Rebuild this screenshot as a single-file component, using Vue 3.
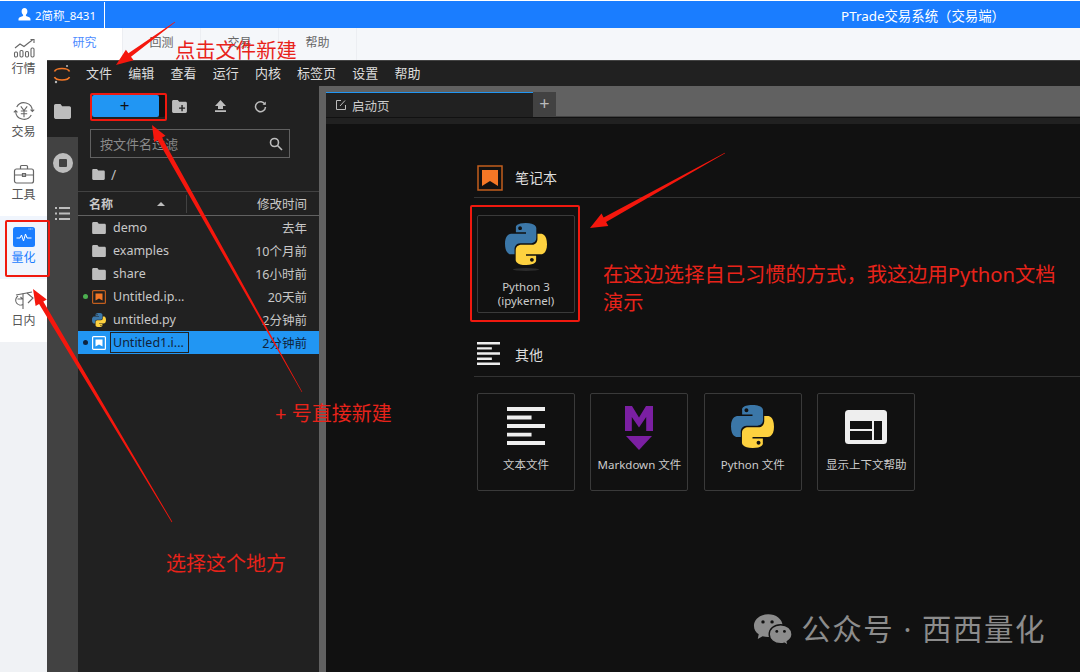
<script setup>
const navItems = [
  { label: '行情', icon: 'market' },
  { label: '交易', icon: 'trade' },
  { label: '工具', icon: 'tool' },
  { label: '量化', icon: 'quant', active: true },
  { label: '日内', icon: 'intraday' },
]

const topTabs = ['研究', '回测', '交易', '帮助']
const menus = ['文件', '编辑', '查看', '运行', '内核', '标签页', '设置', '帮助']

const files = [
  { name: 'demo', time: '去年', type: 'folder' },
  { name: 'examples', time: '10个月前', type: 'folder' },
  { name: 'share', time: '16小时前', type: 'folder' },
  { name: 'Untitled.ip...', time: '20天前', type: 'notebook', dot: 'green' },
  { name: 'untitled.py', time: '2分钟前', type: 'python' },
  { name: 'Untitled1.i...', time: '2分钟前', type: 'notebook', dot: 'dark', selected: true },
]

const otherCards = [
  { label: '文本文件', icon: 'text' },
  { label: 'Markdown 文件', icon: 'markdown' },
  { label: 'Python 文件', icon: 'python' },
  { label: '显示上下文帮助', icon: 'help' },
]

// tail -> tip, tapered like a hand-drawn annotation arrow
const arrows = [
  { x1: 175, y1: 22, x2: 116, y2: 65, tail: 0.3, neck: 2.2, head: 6.5, len: 17 },
  { x1: 302, y1: 392, x2: 152, y2: 125, tail: 0.3, neck: 2.5, head: 6.5, len: 16 },
  { x1: 172, y1: 522, x2: 33, y2: 289, tail: 0.3, neck: 2.5, head: 6.5, len: 16 },
  { x1: 725, y1: 153, x2: 590, y2: 228, tail: 0.3, neck: 2.5, head: 7, len: 17 },
]

function arrowPoints(a) {
  const dx = a.x2 - a.x1
  const dy = a.y2 - a.y1
  const d = Math.hypot(dx, dy)
  const ux = dx / d
  const uy = dy / d
  const nx = -uy
  const ny = ux
  const bx = a.x2 - ux * a.len
  const by = a.y2 - uy * a.len
  return [
    [a.x1 + nx * a.tail, a.y1 + ny * a.tail],
    [bx + nx * a.neck, by + ny * a.neck],
    [bx + nx * a.head, by + ny * a.head],
    [a.x2, a.y2],
    [bx - nx * a.head, by - ny * a.head],
    [bx - nx * a.neck, by - ny * a.neck],
    [a.x1 - nx * a.tail, a.y1 - ny * a.tail],
  ].map(p => p.map(n => n.toFixed(1)).join(',')).join(' ')
}
</script>

<template>
  <div class="page">
    <svg class="defs" width="0" height="0">
      <symbol id="py-logo" viewBox="0 0 22 22">
        <path fill="#3b77a8" d="M10.9 0c-5.6 0-5.2 2.4-5.2 2.4v2.5h5.3v.7H3.6S0 5.2 0 10.9s3.1 5.5 3.1 5.5H5v-2.7s-.1-3.1 3.1-3.1h5.3s3 0 3-2.9V2.9S16.8 0 10.9 0zM7.9 1.7c.5 0 1 .4 1 1s-.4 1-1 1c-.5 0-1-.4-1-1s.5-1 1-1z" />
        <path fill="#fdd13f" d="M11.1 22c5.6 0 5.2-2.4 5.2-2.4v-2.5h-5.3v-.7h7.4s3.6.4 3.6-5.3-3.1-5.5-3.1-5.5H17v2.7s.1 3.1-3.1 3.1H8.6s-3 0-3 2.9v4.8S5.2 22 11.1 22zm3-1.7c-.5 0-1-.4-1-1s.4-1 1-1c.5 0 1 .4 1 1s-.5 1-1 1z" />
      </symbol>
      <symbol id="folder" viewBox="0 0 16 14">
        <path fill="currentColor" d="M1.5 0h4.6l1.6 2h6.8c.8 0 1.5.7 1.5 1.5v9c0 .8-.7 1.5-1.5 1.5h-13C.7 14 0 13.300 0 12.500v-11C0 .7.700 0 1.500 0z" />
      </symbol>
      <symbol id="lines" viewBox="0 0 24 24">
        <path fill="currentColor" d="M0 0h24v2.500H0zM0 5.400h15.500v2.500H0zM0 10.800h24v2.500H0zM0 16.200h15.500v2.500H0zM0 21.500h24V24H0z" />
      </symbol>
    </svg>

    <header class="topbar">
      <div class="user">
        <svg width="13" height="13" viewBox="0 0 13 13"><path fill="#fff" d="M6.500 0C8.300 0 9.400 1.400 9.400 3.300 9.400 5 8.600 6.300 7.800 7c0 .8.500 1.100 1.500 1.500 2 .7 3.200 1.300 3.200 2.500v1.500H.5V11c0-1.200 1.200-1.800 3.200-2.500 1-.4 1.500-.7 1.500-1.500C4.400 6.300 3.600 5 3.600 3.300 3.600 1.400 4.700 0 6.500 0z" /></svg>
        <span>2简称_8431</span>
      </div>
      <div class="title">PTrade交易系统（交易端）</div>
    </header>

    <div class="shell">
      <nav class="sidenav">
        <div v-for="item in navItems" :key="item.label" class="nav-item" :class="{ active: item.active }">
          <svg v-if="item.icon === 'market'" class="nav-icon" viewBox="0 0 22 20" fill="none" stroke="#666" stroke-width="1.100">
            <path d="M2 10l5-4 4 2.500 5-4 3.500-2.500" /><path d="M17.500 1.500h3.500V5" />
            <rect x="1.500" y="14" width="3" height="5" rx="1.200" /><rect x="7" y="12.500" width="3" height="6.500" rx="1.200" /><rect x="12.500" y="13.500" width="3" height="5.500" rx="1.200" /><rect x="18" y="10" width="3" height="9" rx="1.200" />
          </svg>
          <svg v-else-if="item.icon === 'trade'" class="nav-icon" viewBox="0 0 22 22" fill="none" stroke="#666" stroke-width="1.200">
            <path d="M3 6.500A9.200 9.200 0 0 1 20.200 11" /><path d="M19 15.500A9.200 9.200 0 0 1 1.800 11" />
            <path d="M18.200 9.500l2 2 2-2M3.800 12.500l-2-2-2 2" />
            <path d="M7.500 6l3.500 4.500L14.500 6M7.500 11h7M7.500 14h7M11 10.500V18" />
          </svg>
          <svg v-else-if="item.icon === 'tool'" class="nav-icon" viewBox="0 0 22 20" fill="none" stroke="#666" stroke-width="1.200">
            <rect x="1.500" y="5" width="19" height="14" rx="2" /><path d="M7.500 5V2.500c0-.6.400-1 1-1h5c.6 0 1 .4 1 1V5M1.500 11h19M9.500 9.500h3v3h-3z" />
          </svg>
          <svg v-else-if="item.icon === 'quant'" class="nav-icon" viewBox="0 0 22 20">
            <rect width="22" height="20" rx="2.500" fill="#1a7dff" />
            <path d="M3.500 11h3.500l1.500-3 2 6 2-7 1.500 4h4.500" fill="none" stroke="#fff" stroke-width="1" />
            <path d="M15.500 2h4" stroke="#cfe2ff" stroke-width="1" stroke-dasharray="1 .6" />
          </svg>
          <svg v-else class="nav-icon" viewBox="0 0 22 20" fill="none" stroke="#666" stroke-width="1.100">
            <path d="M3 5l16-3" /><path d="M5 6c-2.500 1.500-3 5-1.500 7 1.500 2 4.500 2.500 6.500 1.500" /><path d="M4.500 9h5l-2-2M10 3.500V19" />
            <path d="M14 3l6 5-5 5" />
          </svg>
          <span>{{ item.label }}</span>
        </div>
      </nav>

      <div class="workspace">
        <div class="tabs">
          <div v-for="(tab, i) in topTabs" :key="tab" class="tab" :class="{ current: i === 0 }">{{ tab }}</div>
        </div>

        <div class="menubar">
          <svg class="jlogo" width="18" height="20" viewBox="0 0 18 20" fill="none">
            <path d="M1.500 7.500C3 3.500 15 3.500 16.500 7.500" stroke="#f37726" stroke-width="1.600" />
            <path d="M1.500 13C3 17 15 17 16.500 13" stroke="#f37726" stroke-width="1.600" />
            <circle cx="14" cy="2" r="1" fill="#bbb" /><circle cx="3" cy="18" r="1.200" fill="#bbb" />
          </svg>
          <span v-for="m in menus" :key="m" class="menu">{{ m }}</span>
        </div>

        <div class="lab">
          <aside class="strip">
            <div class="strip-active">
              <svg class="strip-folder" width="17" height="15"><use href="#folder" /></svg>
            </div>
            <div class="strip-rest">
              <div class="stop"><i></i></div>
              <svg class="strip-list" width="15" height="13" viewBox="0 0 15 13" fill="#bdbdbd">
                <path d="M0 0h2v2H0zM4 0h11v2H4zM0 5.500h2v2H0zM4 5.500h11v2H4zM0 11h2v2H0zM4 11h11v2H4z" />
              </svg>
            </div>
          </aside>

          <section class="browser">
            <div class="toolbar">
              <div class="new-btn"><div class="new-main">+</div></div>
              <svg class="tool-icon first" width="15" height="13" viewBox="0 0 16 14">
                <use href="#folder" /><path d="M10 5.500h1.500V8H14v1.500h-2.500V12H10V9.500H7.500V8H10z" fill="#212121" />
              </svg>
              <svg class="tool-icon" width="11" height="12" viewBox="0 0 11 12" fill="#bdbdbd"><path d="M5.500 0L11 6H8v3H3V6H0zM0 10.300h11V12H0z" /></svg>
              <svg class="tool-icon" width="13" height="13" viewBox="0 0 13 13" fill="none" stroke="#bdbdbd" stroke-width="1.500"><path d="M11 4.500A5 5 0 1 0 11.500 7" /><path d="M8.500 4.700h3.300V1.400z" fill="#bdbdbd" stroke="none" /></svg>
            </div>

            <div class="filter">
              <span>按文件名过滤</span>
              <svg width="14" height="14" viewBox="0 0 14 14" fill="none" stroke="#bdbdbd" stroke-width="1.600"><circle cx="5.500" cy="5.500" r="4" /><path d="M8.500 8.500L13 13" /></svg>
            </div>

            <div class="crumb">
              <svg width="13" height="11"><use href="#folder" /></svg>
              <span>/</span>
            </div>

            <div class="list-head">
              <div class="col-name"><b>名称</b><i class="sort"></i></div>
              <div class="col-time">修改时间</div>
            </div>

            <div v-for="f in files" :key="f.name" class="row" :class="{ selected: f.selected }">
              <i v-if="f.dot" class="dot" :class="f.dot"></i>
              <svg v-if="f.type === 'folder'" class="file-icon folder-icon" width="14" height="12"><use href="#folder" /></svg>
              <svg v-else-if="f.type === 'python'" class="file-icon" width="14" height="14"><use href="#py-logo" /></svg>
              <svg v-else class="file-icon" width="14" height="14" viewBox="0 0 14 14">
                <rect x=".6" y=".6" width="12.800" height="12.800" rx="1" fill="none" :stroke="f.selected ? '#fff' : '#c25e1d'" stroke-width="1.200" />
                <path d="M3.500 3.500h7v7L7 8.500l-3.500 2z" :fill="f.selected ? '#fff' : '#f37726'" />
              </svg>
              <span class="fname" :class="{ editing: f.selected }">{{ f.name }}</span>
              <span class="ftime">{{ f.time }}</span>
            </div>
          </section>

          <main class="main">
            <div class="doc-tabs">
              <div class="doc-tab">
                <svg width="10" height="10" viewBox="0 0 10 10" fill="none" stroke="#bbb" stroke-width="1"><path d="M9.500 5v4.500H.5V.5H5M4 6l5-5.500" /></svg>
                <span>启动页</span>
              </div>
              <div class="doc-add">+</div>
            </div>
            <div class="doc-sub"></div>

            <div class="launcher">
              <div class="sec-head">
                <svg width="26" height="26" viewBox="0 0 26 26">
                  <rect x="1" y="1" width="24" height="24" fill="none" stroke="#c25e1d" stroke-width="1.500" />
                  <path d="M5 5h16v16l-8-5-8 5z" fill="#f37726" />
                </svg>
                <span>笔记本</span>
              </div>
              <div class="cards">
                <div class="card kernel">
                  <svg class="kernel-logo" width="42" height="42"><use href="#py-logo" /></svg>
                  <i class="shadow"></i>
                  <div class="card-label two-line">Python 3<br />(ipykernel)</div>
                </div>
              </div>

              <div class="sec-head other">
                <svg class="lines-icon" width="23" height="23"><use href="#lines" /></svg>
                <span>其他</span>
              </div>
              <div class="cards">
                <div v-for="c in otherCards" :key="c.label" class="card">
                  <svg v-if="c.icon === 'text'" class="other-text" width="38" height="38"><use href="#lines" /></svg>
                  <svg v-else-if="c.icon === 'markdown'" class="other-md" width="30" height="46" viewBox="0 0 30 46">
                    <path d="M1 1h7l7 11.500L22 1h7v25h-6.800V12L15 22.500 7.800 12v14H1z" fill="#7b1fa2" />
                    <path d="M2 31h26L15 45z" fill="#7b1fa2" />
                  </svg>
                  <svg v-else-if="c.icon === 'python'" class="other-py" width="43" height="43"><use href="#py-logo" /></svg>
                  <svg v-else class="other-help" width="42" height="34" viewBox="0 0 42 34">
                    <rect width="42" height="34" rx="3.500" fill="#eee" />
                    <path d="M5 11h22v8H5zM5 21h22v9H5zM29 11h8v19h-8z" fill="#111" />
                  </svg>
                  <div class="card-label">{{ c.label }}</div>
                </div>
              </div>
            </div>

            <div class="watermark">
              <svg width="40" height="33" viewBox="0 0 42 34" fill="#8c8c8c">
                <path d="M16 1C8 1 1 6 1 13c0 4 2 7 5 9l-1 5 5-3c2 .6 4 .8 6 .8C24 25 31 20 31 13S24 1 16 1z" />
                <path d="M29 12c-7 0-12 4.500-12 10s5 10 12 10c1.500 0 3-.2 4-.6l4 2.400-1-4c3-2 5-4.500 5-7.800 0-5.500-5-10-12-10z" stroke="#111" stroke-width="1.500" />
                <circle cx="10.500" cy="9" r="1.800" fill="#111" /><circle cx="20" cy="9" r="1.800" fill="#111" />
                <circle cx="25" cy="19" r="1.500" fill="#111" /><circle cx="33" cy="19" r="1.500" fill="#111" />
              </svg>
              <span>公众号 · 西西量化</span>
            </div>
          </main>
        </div>
      </div>
    </div>

    <!-- Red annotations drawn on top of the screenshot -->
    <div class="mark box-new"></div>
    <div class="mark box-quant"></div>
    <div class="mark box-kernel"></div>
    <svg class="arrows" width="1080" height="672">
      <polygon v-for="(a, i) in arrows" :key="i" :points="arrowPoints(a)" fill="#f5170d" />
    </svg>
    <div class="note n1">点击文件新建</div>
    <div class="note n2">+ 号直接新建</div>
    <div class="note n3">选择这个地方</div>
    <div class="note n4">在这边选择自己习惯的方式，我这边用Python文档<br />演示</div>
  </div>
</template>

<style>
body {
  margin: 0;
  background: #111;
}
</style>

<style scoped>
.page {
  position: relative;
  width: 1080px;
  height: 672px;
  overflow: hidden;
  padding-top: 1px;
  box-sizing: border-box;
  background: #fff;
  font-family: "Noto Sans", "Noto Sans CJK SC", sans-serif;
  font-size: 12px;
}

.defs {
  position: absolute;
}

.topbar {
  height: 27px;
  background: #1a7dff;
  color: #fff;
  display: flex;
  align-items: center;
  justify-content: space-between;
  padding: 0 75px 0 18px;
}

.user {
  display: flex;
  align-items: center;
  gap: 4px;
  height: 26px;
  width: 86px;
  border-right: 1px solid #fff;
  font-size: 11.500px;
}

.title {
  font-size: 13.400px;
}

.shell {
  display: flex;
  height: 644px;
}

.sidenav {
  width: 47px;
  flex-shrink: 0;
  background: #f0f2f5;
}

.nav-item {
  height: 62.8px;
  background: #fff;
  color: #555;
  display: flex;
  flex-direction: column;
  align-items: center;
  justify-content: center;
  gap: 1px;
  padding-bottom: 3px;
  box-sizing: border-box;
}

.nav-item.active {
  background: #f0f5fd;
  color: #1a7dff;
}

.nav-icon {
  width: 22px;
  height: 20px;
}

.workspace {
  flex: 1;
  min-width: 0;
  display: flex;
  flex-direction: column;
}

.tabs {
  height: 32px;
  flex-shrink: 0;
  background: #f5f7fa;
  display: flex;
}

.tab {
  width: 78px;
  line-height: 30px;
  text-align: center;
  color: #666;
  border-right: 1px solid #eceef2;
  box-sizing: border-box;
}

.tab.current {
  width: 76px;
  background: #fff;
  color: #4d8cff;
}

.menubar {
  height: 26px;
  flex-shrink: 0;
  background: #212121;
  border-top: 1px solid #444;
  box-sizing: border-box;
  display: flex;
  align-items: center;
  padding-bottom: 3px;
  color: #ddd;
  font-size: 13px;
}

.jlogo {
  margin: 3px 7px 0 6px;
  flex-shrink: 0;
}

.menu {
  padding: 0 8.100px;
}

.lab {
  flex: 1;
  min-height: 0;
  display: flex;
  background: #616161;
}

.strip {
  width: 31px;
  flex-shrink: 0;
  display: flex;
  flex-direction: column;
}

.strip-active {
  height: 51px;
  background: #212121;
  display: flex;
  align-items: center;
  justify-content: center;
  color: #bdbdbd;
}

.strip-rest {
  flex: 1;
  background: #424242;
  display: flex;
  flex-direction: column;
  align-items: center;
  padding-top: 16px;
}

.stop {
  width: 20px;
  height: 20px;
  border-radius: 50%;
  background: #bdbdbd;
  display: flex;
  align-items: center;
  justify-content: center;
}

.stop i {
  width: 8px;
  height: 8px;
  border-radius: 1px;
  background: #424242;
}

.strip-list {
  margin-top: 34px;
}

.browser {
  width: 241px;
  flex-shrink: 0;
  background: #212121;
  color: #c8c8c8;
  display: flex;
  flex-direction: column;
}

.toolbar {
  display: flex;
  align-items: center;
  height: 40px;
  padding: 0 0 0 14px;
  flex-shrink: 0;
}

.new-btn {
  width: 73px;
  height: 22px;
  background: #111;
  border-radius: 2px;
}

.new-main {
  width: 67px;
  height: 22px;
  padding-right: 2px;
  box-sizing: border-box;
  background: #2196f3;
  border-radius: 2px;
  color: #111;
  font-size: 17px;
  line-height: 21px;
  text-align: center;
}

.tool-icon {
  color: #bdbdbd;
  margin-left: 28px;
}

.tool-icon.first {
  margin-left: 7px;
}

.filter {
  margin: 3px 29px 0 12px;
  height: 29px;
  box-sizing: border-box;
  border: 1px solid #616161;
  display: flex;
  align-items: center;
  justify-content: space-between;
  padding: 0 6px 0 9px;
  color: #8a8a8a;
  font-size: 13px;
  flex-shrink: 0;
}

.crumb {
  display: flex;
  align-items: center;
  gap: 6px;
  height: 33px;
  padding-left: 14px;
  color: #bdbdbd;
  font-size: 14px;
  flex-shrink: 0;
}

.list-head {
  display: flex;
  height: 25px;
  flex-shrink: 0;
  box-sizing: border-box;
  border-top: 1px solid #424242;
  border-bottom: 1px solid #616161;
  align-items: center;
}

.col-name {
  width: 109px;
  height: 18px;
  display: flex;
  align-items: center;
  justify-content: space-between;
  padding: 0 21px 0 11px;
  box-sizing: border-box;
  border-right: 1px solid #424242;
}

.col-name b {
  font-weight: 700;
}

.sort {
  width: 0;
  height: 0;
  border: 4px solid transparent;
  border-top: 0;
  border-bottom: 4px solid #bdbdbd;
}

.col-time {
  flex: 1;
  text-align: right;
  padding-right: 12px;
  font-size: 12.500px;
}

.row {
  position: relative;
  display: flex;
  align-items: center;
  height: 23px;
  padding: 0 12px 0 14px;
  font-size: 12.500px;
}

.row.selected {
  background: #2196f3;
  color: #10233a;
}

.dot {
  position: absolute;
  left: 5px;
  top: 9px;
  width: 5px;
  height: 5px;
  border-radius: 50%;
}

.dot.green {
  background: #4caf50;
}

.dot.dark {
  background: #0d2440;
}

.file-icon {
  flex-shrink: 0;
  margin-right: 7px;
}

.folder-icon {
  color: #bdbdbd;
}

.fname {
  box-sizing: border-box;
  line-height: 19px;
}

.fname.editing {
  width: 79px;
  margin-left: -3px;
  padding-left: 2px;
  border: 1px solid #222;
  white-space: nowrap;
  overflow: hidden;
}

.ftime {
  margin-left: auto;
}

.main {
  position: relative;
  flex: 1;
  min-width: 0;
  margin-left: 7px;
  background: #111;
  color: #ddd;
  display: flex;
  flex-direction: column;
}

.doc-tabs {
  height: 30px;
  margin-bottom: 1px;
  flex-shrink: 0;
  background: #616161;
  border-bottom: 1px solid #424242;
  box-sizing: content-box;
  display: flex;
  align-items: flex-end;
}

.doc-tab {
  width: 207px;
  height: 25px;
  margin-bottom: -1px;
  box-sizing: border-box;
  background: #212121;
  border-top: 1px solid #2196f3;
  display: flex;
  align-items: center;
  gap: 6px;
  padding: 0 0 0 10px;
  color: #ccc;
  font-size: 12.500px;
}

.doc-add {
  width: 23px;
  height: 24px;
  background: #424242;
  color: #bbb;
  font-size: 18px;
  line-height: 23px;
  text-align: center;
}

.doc-sub {
  height: 6px;
  background: #212121;
  flex-shrink: 0;
}

.launcher {
  padding: 41px 0 0 148px;
  display: flex;
  flex-direction: column;
}

.sec-head {
  height: 33px;
  margin-bottom: 17px;
  border-bottom: 1px solid #333;
  box-sizing: border-box;
  display: flex;
  align-items: flex-start;
  gap: 12px;
  padding-left: 3px;
  font-size: 14px;
  line-height: 26px;
}

.sec-head.other {
  gap: 15px;
  height: 35px;
  margin-top: 29px;
  margin-bottom: 16px;
}

.lines-icon {
  color: #eee;
}

.cards {
  display: flex;
  gap: 15.400px;
  padding-left: 3px;
}

.card {
  width: 98px;
  height: 98px;
  box-sizing: border-box;
  border: 1px solid #3a3a3a;
  border-radius: 2px;
  display: flex;
  flex-direction: column;
  align-items: center;
  position: relative;
}

.kernel-logo {
  margin-top: 7px;
}

.shadow {
  width: 26px;
  height: 3px;
  margin-top: 3px;
  border-radius: 50%;
  background: #2c2c2c;
}

.card-label {
  position: absolute;
  left: 0;
  right: 0;
  top: 64px;
  text-align: center;
  font-size: 11.500px;
  line-height: 14px;
  color: #ccc;
  white-space: nowrap;
}

.other-text {
  margin-top: 13px;
  color: #eee;
}

.other-md {
  margin-top: 11px;
}

.other-py {
  margin-top: 11px;
}

.other-help {
  margin-top: 16px;
}

.watermark {
  position: absolute;
  right: 34px;
  bottom: 24px;
  display: flex;
  align-items: center;
  gap: 8px;
  color: #8c8c8c;
  font-size: 29.500px;
  letter-spacing: 1.500px;
  line-height: 38px;
}

.arrows {
  position: absolute;
  left: 0;
  top: 0;
  pointer-events: none;
}

.mark {
  position: absolute;
  box-sizing: border-box;
  border: 2.500px solid #f0190f;
  border-radius: 2px;
}

.box-new {
  left: 90px;
  top: 93px;
  width: 77px;
  height: 28px;
}

.box-quant {
  left: 5px;
  top: 220px;
  width: 45px;
  height: 57px;
}

.box-kernel {
  left: 470px;
  top: 205px;
  width: 110px;
  height: 117px;
}

.note {
  position: absolute;
  color: #e8231a;
  white-space: nowrap;
  font-size: 20px;
  line-height: 28px;
}

.n1 {
  left: 175px;
  top: 36px;
  font-size: 20.300px;
}

.n2 {
  left: 275px;
  top: 400px;
}

.n3 {
  left: 166px;
  top: 550px;
}

.n4 {
  left: 603px;
  top: 260px;
  font-size: 20.300px;
}
</style>
